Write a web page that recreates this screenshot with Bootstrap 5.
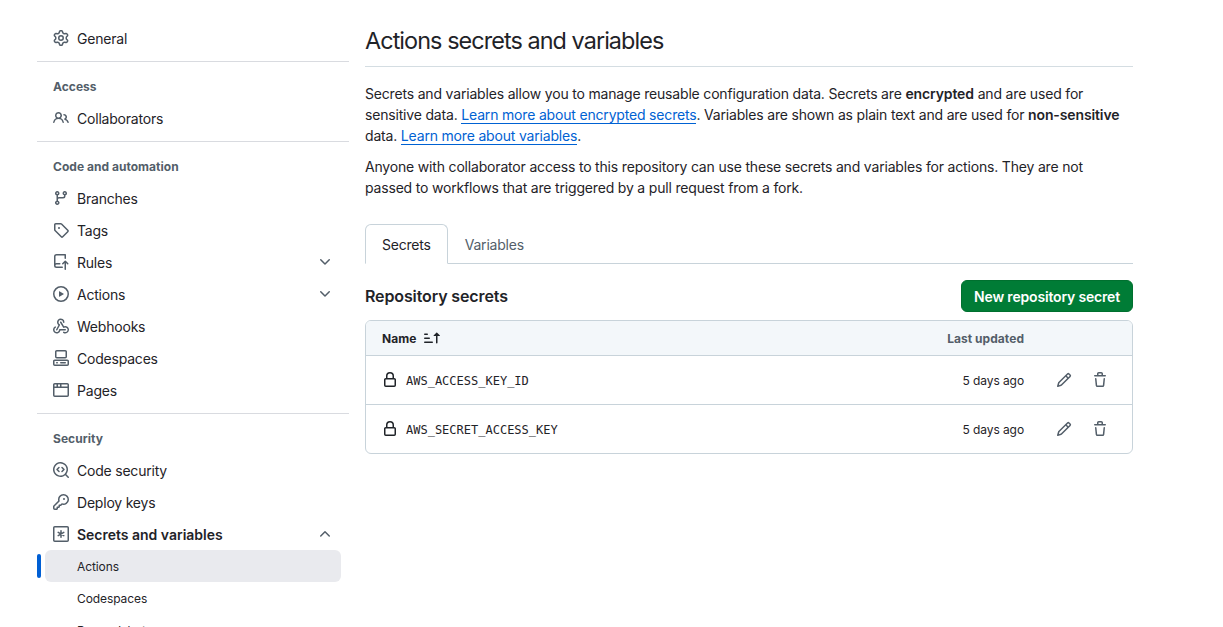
<!DOCTYPE html>
<html lang="en">
<head>
<meta charset="utf-8">
<meta name="viewport" content="width=device-width, initial-scale=1">
<title>Actions secrets and variables</title>
<link href="https://cdn.jsdelivr.net/npm/bootstrap@5.3.0/dist/css/bootstrap.min.css" rel="stylesheet">
<style>
:root { --ink:#1f2328; --dim:#535e69; --line:#d9dbe0; --edge:#c8d3da; }
body { font-family:Inter,"Liberation Sans",sans-serif; font-size:14px; font-weight:440; letter-spacing:-.21px; line-height:21px; color:var(--ink); background:#fff; overflow:hidden; height:627px; }
.page { padding:22px 90px 0 37px; gap:16px; }
.side { width:312px; flex:none; }
.side hr { margin:7px 0 0; border:0; border-top:1px solid var(--line); opacity:1; }
.side h3 { font-size:12px; line-height:18px; font-weight:650; color:var(--dim); margin:0; padding:16px 16px 6px; height:40px; letter-spacing:.03px; }
.side .nav-link { height:32px; padding:0 16px; gap:8px; color:var(--ink); font-size:14px; line-height:20px; }
.side .nav-link span { position:relative; top:1px; }
.side .nav-link.fw-semibold { letter-spacing:-.01px; }
.side svg, .act svg { fill:var(--dim); flex:none; }
.side .sub { font-size:12px; letter-spacing:-.09px; padding-left:32px; margin:0 8px; border-radius:6px; }
.side .sub.current { background:#e9eaee; position:relative; }
.side .sub.current::before { content:""; position:absolute; left:-8px; top:4px; width:4px; height:24px; border-radius:2px; background:#005fd4; }
.main { flex:1; min-width:0; }
h1 { font-size:23.4px; line-height:36px; font-weight:440; letter-spacing:-.93px; margin:0 0 16px; padding:1px 0 7px; border-bottom:1px solid #d4dde2; }
.main p { margin:0 0 10px; white-space:nowrap; letter-spacing:-.18px; }
.main p b { font-weight:600; letter-spacing:-.12px; }
.main p a { color:#0062d3; text-decoration:none; border-bottom:1px solid #0062d3; }
.nav-tabs { margin-top:26px; height:40px; --bs-nav-tabs-border-color:var(--edge); --bs-nav-tabs-border-radius:6px; }
.nav-tabs .nav-link { height:40px; padding:9px 16px; color:var(--dim); line-height:22px; }
.nav-tabs .nav-link.active { color:var(--ink); border-color:var(--edge) var(--edge) #fff; border-left-color:var(--edge); }
h2 { font-size:16px; line-height:24px; font-weight:600; margin:0; letter-spacing:-.12px; }
.btn-new { --bs-btn-bg:#007c36; --bs-btn-color:#fff; --bs-btn-border-color:#00702f; --bs-btn-hover-bg:#00702f; --bs-btn-hover-color:#fff; width:172px; height:32px; padding:2px 0 0; font-size:14px; font-weight:600; letter-spacing:-.18px; line-height:20px; border-radius:6px; white-space:nowrap; }
.box { border:1px solid var(--edge); border-radius:6px; margin-top:8px; font-size:12px; line-height:18px; letter-spacing:-.09px; overflow:hidden; }
.box-head { height:35px; background:#f3f7fa; padding:0 108px 0 16px; font-weight:650; letter-spacing:.05px; border-bottom:1px solid var(--edge); }
.box-head span { padding-top:1px; }
.updated { color:var(--dim); }
.box-row { height:48px; padding:0 24px 0 16px; }
.box-row.ruled { height:49px; border-bottom:1px solid var(--edge); }
.box-row span, .box-row code { padding-top:2px; }
.box-row code { font:12px "DejaVu Sans Mono",monospace; letter-spacing:0; color:var(--ink); margin-left:8px; }
.act { border:0; background:none; padding:0; width:16px; height:16px; line-height:0; }
.act.edit { margin:0 20px 0 32px; }
</style>
</head>
<body>
<svg class="d-none" xmlns="http://www.w3.org/2000/svg">
<symbol id="gear" viewBox="0 0 16 16"><path d="M8 0a8.2 8.2 0 0 1 .701.031C9.444.095 9.99.645 10.16 1.29l.288 1.107c.018.066.079.158.212.224.231.114.454.243.668.386.123.082.233.09.299.071l1.103-.303c.644-.176 1.392.021 1.82.63.27.385.506.792.704 1.218.315.675.111 1.422-.364 1.891l-.814.806c-.049.048-.098.147-.088.294.016.257.016.515 0 .772-.01.147.038.246.088.294l.814.806c.475.469.679 1.216.364 1.891a7.977 7.977 0 0 1-.704 1.217c-.428.61-1.176.807-1.82.63l-1.102-.302c-.067-.019-.177-.011-.3.071a5.909 5.909 0 0 1-.668.386c-.133.066-.194.158-.211.224l-.29 1.106c-.168.646-.715 1.196-1.458 1.26a8.006 8.006 0 0 1-1.402 0c-.743-.064-1.289-.614-1.458-1.26l-.289-1.106c-.018-.066-.079-.158-.212-.224a5.738 5.738 0 0 1-.668-.386c-.123-.082-.233-.09-.299-.071l-1.103.303c-.644.176-1.392-.021-1.82-.63a8.12 8.12 0 0 1-.704-1.218c-.315-.675-.111-1.422.363-1.891l.815-.806c.05-.048.098-.147.088-.294a6.214 6.214 0 0 1 0-.772c.01-.147-.038-.246-.088-.294l-.815-.806C.635 6.045.431 5.298.746 4.623a7.92 7.92 0 0 1 .704-1.217c.428-.61 1.176-.807 1.82-.63l1.102.302c.067.019.177.011.3-.071.214-.143.437-.272.668-.386.133-.066.194-.158.211-.224l.29-1.106C6.009.645 6.556.095 7.299.03 7.53.01 7.764 0 8 0Zm-.571 1.525c-.036.003-.108.036-.137.146l-.289 1.105c-.147.561-.549.967-.998 1.189-.173.086-.34.183-.5.29-.417.278-.97.423-1.529.27l-1.103-.303c-.109-.03-.175.016-.195.045-.22.312-.412.644-.573.99-.014.031-.021.11.059.19l.815.806c.411.406.562.957.53 1.456a4.709 4.709 0 0 0 0 .582c.032.499-.119 1.05-.53 1.456l-.815.806c-.081.08-.073.159-.059.19.162.346.353.677.573.989.02.03.085.076.195.046l1.102-.303c.56-.153 1.113-.008 1.53.27.161.107.328.204.501.29.447.222.85.629.997 1.189l.289 1.105c.029.109.101.143.137.146a6.6 6.6 0 0 0 1.142 0c.036-.003.108-.036.137-.146l.289-1.105c.147-.561.549-.967.998-1.189.173-.086.34-.183.5-.29.417-.278.97-.423 1.529-.27l1.103.303c.109.029.175-.016.195-.045.22-.313.411-.644.573-.99.014-.031.021-.11-.059-.19l-.815-.806c-.411-.406-.562-.957-.53-1.456a4.709 4.709 0 0 0 0-.582c-.032-.499.119-1.05.53-1.456l.815-.806c.081-.08.073-.159.059-.19a6.464 6.464 0 0 0-.573-.989c-.02-.03-.085-.076-.195-.046l-1.102.303c-.56.153-1.113.008-1.53-.27a4.44 4.44 0 0 0-.501-.29c-.447-.222-.85-.629-.997-1.189l-.289-1.105c-.029-.11-.101-.143-.137-.146a6.6 6.6 0 0 0-1.142 0ZM11 8a3 3 0 1 1-6 0 3 3 0 0 1 6 0ZM9.5 8a1.5 1.5 0 1 0-3.001.001A1.5 1.5 0 0 0 9.5 8Z"/></symbol>
<symbol id="people" viewBox="0 0 16 16"><path d="M2 5.5a3.5 3.5 0 1 1 5.898 2.549 5.508 5.508 0 0 1 3.034 4.084.75.75 0 1 1-1.482.235 4 4 0 0 0-7.9 0 .75.75 0 0 1-1.482-.236A5.507 5.507 0 0 1 3.102 8.05 3.493 3.493 0 0 1 2 5.5ZM11 4a3.001 3.001 0 0 1 2.22 5.018 5.01 5.01 0 0 1 2.56 3.012.749.749 0 0 1-.885.954.752.752 0 0 1-.549-.514 3.507 3.507 0 0 0-2.522-2.372.75.75 0 0 1-.574-.73v-.352a.75.75 0 0 1 .416-.672A1.5 1.5 0 0 0 11 5.5.75.75 0 0 1 11 4Zm-5.5-.5a2 2 0 1 0-.001 3.999A2 2 0 0 0 5.5 3.5Z"/></symbol>
<symbol id="branch" viewBox="0 0 16 16"><path d="M9.5 3.25a2.25 2.25 0 1 1 3 2.122V6A2.5 2.5 0 0 1 10 8.5H6a1 1 0 0 0-1 1v1.128a2.251 2.251 0 1 1-1.5 0V5.372a2.25 2.25 0 1 1 1.5 0v1.836A2.493 2.493 0 0 1 6 7h4a1 1 0 0 0 1-1v-.628A2.25 2.25 0 0 1 9.5 3.25Zm-6 0a.75.75 0 1 0 1.5 0 .75.75 0 0 0-1.5 0Zm8.25-.75a.75.75 0 1 0 0 1.5.75.75 0 0 0 0-1.5ZM4.25 12a.75.75 0 1 0 0 1.5.75.75 0 0 0 0-1.5Z"/></symbol>
<symbol id="tag" viewBox="0 0 16 16"><path d="M1 7.775V2.75C1 1.784 1.784 1 2.75 1h5.025c.464 0 .91.184 1.238.513l6.25 6.25a1.75 1.75 0 0 1 0 2.474l-5.026 5.026a1.75 1.75 0 0 1-2.474 0l-6.25-6.25A1.752 1.752 0 0 1 1 7.775Zm1.5 0c0 .066.026.13.073.177l6.25 6.25a.25.25 0 0 0 .354 0l5.025-5.025a.25.25 0 0 0 0-.354l-6.25-6.25a.25.25 0 0 0-.177-.073H2.75a.25.25 0 0 0-.25.25ZM6 5a1 1 0 1 1 0 2 1 1 0 0 1 0-2Z"/></symbol>
<symbol id="push" viewBox="0 0 16 16"><path d="M1 2.5A2.5 2.5 0 0 1 3.5 0h8.75a.75.75 0 0 1 .75.75v3.5a.75.75 0 0 1-1.5 0V1.5h-8a1 1 0 0 0-1 1v6.708A2.493 2.493 0 0 1 3.5 9h3.25a.75.75 0 0 1 0 1.5H3.5a1 1 0 0 0 0 2h5.75a.75.75 0 0 1 0 1.5H3.5A2.5 2.5 0 0 1 1 11.5Zm13.23 7.79h-.001l-1.224-1.224v6.184a.75.75 0 0 1-1.5 0V9.066L10.28 10.29a.75.75 0 0 1-1.06-1.061l2.505-2.504a.75.75 0 0 1 1.06 0L15.29 9.23a.751.751 0 0 1-.018 1.042.751.751 0 0 1-1.042.018Z"/></symbol>
<symbol id="play" viewBox="0 0 16 16"><path d="M8 0a8 8 0 1 1 0 16A8 8 0 0 1 8 0ZM1.5 8a6.5 6.5 0 1 0 13 0 6.5 6.5 0 0 0-13 0Zm4.879-2.773 4.264 2.559a.25.25 0 0 1 0 .428l-4.264 2.559A.25.25 0 0 1 6 10.559V5.442a.25.25 0 0 1 .379-.215Z"/></symbol>
<symbol id="webhook" viewBox="0 0 16 16"><path d="M5.5 4.25a2.25 2.25 0 0 1 4.5 0 .75.75 0 0 0 1.5 0 3.75 3.75 0 1 0-6.14 2.889l-2.272 4.258a.75.75 0 0 0 1.324.706L7 7.25a.75.75 0 0 0-.309-1.015A2.25 2.25 0 0 1 5.5 4.25Z"/><path d="M7.364 3.607a.75.75 0 0 1 1.03.257l2.608 4.349a3.75 3.75 0 1 1-.628 6.785.75.75 0 0 1 .752-1.299 2.25 2.25 0 1 0-.033-3.88.75.75 0 0 1-1.03-.256L7.107 4.636a.75.75 0 0 1 .257-1.03Z"/><path d="M2.9 8.776A.75.75 0 0 1 2.625 9.8 2.25 2.25 0 1 0 6 11.75a.75.75 0 0 1 .75-.751h5.5a.75.75 0 0 1 0 1.5H7.425a3.751 3.751 0 1 1-5.55-3.998.75.75 0 0 1 1.024.274Z"/></symbol>
<symbol id="codespaces" viewBox="0 0 16 16"><path d="M0 11.25c0-.966.784-1.75 1.75-1.75h12.5c.966 0 1.75.784 1.75 1.75v3A1.75 1.75 0 0 1 14.25 16H1.75A1.75 1.75 0 0 1 0 14.25Zm2-9.5C2 .784 2.784 0 3.75 0h8.5C13.216 0 14 .784 14 1.75v5a1.75 1.75 0 0 1-1.75 1.75h-8.5A1.75 1.75 0 0 1 2 6.75Zm1.75-.25a.25.25 0 0 0-.25.25v5c0 .138.112.25.25.25h8.5a.25.25 0 0 0 .25-.25v-5a.25.25 0 0 0-.25-.25Zm-2 9.5a.25.25 0 0 0-.25.25v3c0 .138.112.25.25.25h12.5a.25.25 0 0 0 .25-.25v-3a.25.25 0 0 0-.25-.25Z"/><path d="M7 12.75a.75.75 0 0 1 .75-.75h4.5a.75.75 0 0 1 0 1.5h-4.5a.75.75 0 0 1-.75-.75Zm-4 0a.75.75 0 0 1 .75-.75h.5a.75.75 0 0 1 0 1.5h-.5a.75.75 0 0 1-.75-.75Z"/></symbol>
<symbol id="browser" viewBox="0 0 16 16"><path d="M0 2.75C0 1.784.784 1 1.75 1h12.5c.966 0 1.75.784 1.75 1.75v10.5A1.75 1.75 0 0 1 14.25 15H1.75A1.75 1.75 0 0 1 0 13.25ZM14.5 6h-13v7.25c0 .138.112.25.25.25h12.5a.25.25 0 0 0 .25-.25Zm-6-3.5v2h6V2.75a.25.25 0 0 0-.25-.25ZM5 2.5v2h2v-2Zm-3.25 0a.25.25 0 0 0-.25.25V4.5h2v-2Z"/></symbol>
<symbol id="scan" viewBox="0 0 16 16"><path d="M8.47 4.97a.75.75 0 0 0 0 1.06L9.94 7.5 8.47 8.97a.75.75 0 1 0 1.06 1.06l2-2a.75.75 0 0 0 0-1.06l-2-2a.75.75 0 0 0-1.06 0ZM6.53 6.03a.75.75 0 0 0-1.06-1.06l-2 2a.75.75 0 0 0 0 1.06l2 2a.75.75 0 1 0 1.06-1.06L5.06 7.5l1.47-1.47Z"/><path d="M12.246 13.307a7.501 7.501 0 1 1 1.06-1.06l2.474 2.473a.749.749 0 0 1-.326 1.275.749.749 0 0 1-.734-.215ZM1.5 7.5a6.002 6.002 0 0 0 3.608 5.504 6.002 6.002 0 0 0 6.486-1.117.748.748 0 0 1 .292-.293A6 6 0 1 0 1.5 7.5Z"/></symbol>
<symbol id="key" viewBox="0 0 16 16"><path d="M10.5 0a5.499 5.499 0 1 1-1.288 10.848l-.932.932a.749.749 0 0 1-.53.22H7v.75a.749.749 0 0 1-.22.53l-.5.5a.749.749 0 0 1-.53.22H5v.75a.749.749 0 0 1-.22.53l-.5.5a.749.749 0 0 1-.53.22h-2A1.75 1.75 0 0 1 0 14.25v-2c0-.199.079-.389.22-.53l4.932-4.932A5.5 5.5 0 0 1 10.5 0Zm-4 5.5c-.001.431.069.86.205 1.269a.75.75 0 0 1-.181.768L1.5 12.56v1.69c0 .138.112.25.25.25h1.69l.06-.06v-1.19a.75.75 0 0 1 .75-.75h1.19l.06-.06v-1.19a.75.75 0 0 1 .75-.75h1.19l1.023-1.025a.75.75 0 0 1 .768-.18A4 4 0 1 0 6.5 5.5ZM11 6a1 1 0 1 1 0-2 1 1 0 0 1 0 2Z"/></symbol>
<symbol id="asterisk" viewBox="0 0 16 16"><rect x=".75" y=".75" width="14.5" height="14.5" rx="1" fill="none" stroke="#535e69" stroke-width="1.5"/><path d="M8 4.75v6.5M5.2 6.4l5.6 3.2M5.2 9.6l5.6-3.2" stroke="#535e69" stroke-width="1.5" stroke-linecap="round"/></symbol>
<symbol id="down" viewBox="0 0 16 16"><path d="M12.78 5.22a.749.749 0 0 1 0 1.06l-4.25 4.25a.749.749 0 0 1-1.06 0L3.22 6.28a.749.749 0 1 1 1.06-1.06L8 8.939l3.72-3.719a.749.749 0 0 1 1.06 0Z"/></symbol>
<symbol id="up" viewBox="0 0 16 16"><path d="M3.22 10.53a.749.749 0 0 1 0-1.06l4.25-4.25a.749.749 0 0 1 1.06 0l4.25 4.25a.749.749 0 1 1-1.06 1.06L8 6.811 4.28 10.53a.749.749 0 0 1-1.06 0Z"/></symbol>
<symbol id="sort" viewBox="0 0 16 16"><path d="m12.927 2.573 3 3A.25.25 0 0 1 15.75 6H13.5v6.75a.75.75 0 0 1-1.5 0V6H9.75a.25.25 0 0 1-.177-.427l3-3a.25.25 0 0 1 .354 0ZM0 12.25a.75.75 0 0 1 .75-.75h7.5a.75.75 0 0 1 0 1.5H.75a.75.75 0 0 1-.75-.75Zm0-4a.75.75 0 0 1 .75-.75h4.5a.75.75 0 0 1 0 1.5H.75A.75.75 0 0 1 0 8.25Zm0-4a.75.75 0 0 1 .75-.75h2.5a.75.75 0 0 1 0 1.5H.75A.75.75 0 0 1 0 4.25Z"/></symbol>
<symbol id="lock" viewBox="0 0 16 16"><path d="M4 4a4 4 0 0 1 8 0v2h.25c.966 0 1.75.784 1.75 1.75v5.5A1.75 1.75 0 0 1 12.25 15h-8.5A1.75 1.75 0 0 1 2 13.25v-5.5C2 6.784 2.784 6 3.75 6H4Zm8.25 3.5h-8.5a.25.25 0 0 0-.25.25v5.5c0 .138.112.25.25.25h8.5a.25.25 0 0 0 .25-.25v-5.5a.25.25 0 0 0-.25-.25ZM10.5 6V4a2.5 2.5 0 1 0-5 0v2Z"/></symbol>
<symbol id="pencil" viewBox="0 0 16 16"><path d="M11.013 1.427a1.75 1.75 0 0 1 2.474 0l1.086 1.086a1.75 1.75 0 0 1 0 2.474l-8.61 8.61c-.21.21-.47.364-.756.445l-3.251.93a.75.75 0 0 1-.927-.928l.929-3.25c.081-.286.235-.547.445-.758l8.61-8.61Zm.176 4.823L9.75 4.81l-6.286 6.287a.253.253 0 0 0-.064.108l-.558 1.953 1.953-.558a.253.253 0 0 0 .108-.064Zm1.238-3.763a.25.25 0 0 0-.354 0L10.811 3.75l1.439 1.44 1.263-1.263a.25.25 0 0 0 0-.354Z"/></symbol>
<symbol id="trash" viewBox="0 0 16 16"><path d="M11 1.75V3h2.25a.75.75 0 0 1 0 1.5H2.75a.75.75 0 0 1 0-1.5H5V1.75C5 .784 5.784 0 6.75 0h2.5C10.216 0 11 .784 11 1.75ZM4.496 6.675l.66 6.6a.25.25 0 0 0 .249.225h5.19a.25.25 0 0 0 .249-.225l.66-6.6a.75.75 0 0 1 1.492.149l-.66 6.6A1.748 1.748 0 0 1 10.595 15h-5.19a1.75 1.75 0 0 1-1.741-1.575l-.66-6.6a.75.75 0 1 1 1.492-.15ZM6.5 1.75V3h3V1.75a.25.25 0 0 0-.25-.25h-2.5a.25.25 0 0 0-.25.25Z"/></symbol>
</svg>

<div class="page d-flex align-items-start">
  <nav class="side nav flex-column flex-nowrap">
    <a class="nav-link d-flex align-items-center" href="#"><svg width="16" height="16"><use href="#gear"/></svg><span>General</span></a>
    <hr>
    <h3>Access</h3>
    <a class="nav-link d-flex align-items-center" href="#"><svg width="16" height="16"><use href="#people"/></svg><span>Collaborators</span></a>
    <hr>
    <h3>Code and automation</h3>
    <a class="nav-link d-flex align-items-center" href="#"><svg width="16" height="16"><use href="#branch"/></svg><span>Branches</span></a>
    <a class="nav-link d-flex align-items-center" href="#"><svg width="16" height="16"><use href="#tag"/></svg><span>Tags</span></a>
    <a class="nav-link d-flex align-items-center" href="#"><svg width="16" height="16"><use href="#push"/></svg><span>Rules</span><svg class="ms-auto" width="16" height="16"><use href="#down"/></svg></a>
    <a class="nav-link d-flex align-items-center" href="#"><svg width="16" height="16"><use href="#play"/></svg><span>Actions</span><svg class="ms-auto" width="16" height="16"><use href="#down"/></svg></a>
    <a class="nav-link d-flex align-items-center" href="#"><svg width="16" height="16"><use href="#webhook"/></svg><span>Webhooks</span></a>
    <a class="nav-link d-flex align-items-center" href="#"><svg width="16" height="16"><use href="#codespaces"/></svg><span>Codespaces</span></a>
    <a class="nav-link d-flex align-items-center" href="#"><svg width="16" height="16"><use href="#browser"/></svg><span>Pages</span></a>
    <hr>
    <h3>Security</h3>
    <a class="nav-link d-flex align-items-center" href="#"><svg width="16" height="16"><use href="#scan"/></svg><span>Code security</span></a>
    <a class="nav-link d-flex align-items-center" href="#"><svg width="16" height="16"><use href="#key"/></svg><span>Deploy keys</span></a>
    <a class="nav-link d-flex align-items-center fw-semibold" href="#"><svg width="16" height="16"><use href="#asterisk"/></svg><span>Secrets and variables</span><svg class="ms-auto" width="16" height="16"><use href="#up"/></svg></a>
    <a class="nav-link sub current d-flex align-items-center" href="#"><span>Actions</span></a>
    <a class="nav-link sub d-flex align-items-center" href="#"><span>Codespaces</span></a>
    <a class="nav-link sub d-flex align-items-center" href="#"><span>Dependabot</span></a>
  </nav>

  <main class="main">
    <h1>Actions secrets and variables</h1>
    <p>Secrets and variables allow you to manage reusable configuration data. Secrets are <b>encrypted</b> and are used for<br>sensitive data. <a href="#">Learn more about encrypted secrets</a>. Variables are shown as plain text and are used for <b>non-sensitive</b><br>data. <a href="#">Learn more about variables</a>.</p>
    <p>Anyone with collaborator access to this repository can use these secrets and variables for actions. They are not<br>passed to workflows that are triggered by a pull request from a fork.</p>
    <ul class="nav nav-tabs">
      <li class="nav-item"><a class="nav-link active" href="#">Secrets</a></li>
      <li class="nav-item"><a class="nav-link" href="#">Variables</a></li>
    </ul>
    <div class="d-flex align-items-center justify-content-between mt-3">
      <h2>Repository secrets</h2>
      <button class="btn btn-new" type="button">New repository secret</button>
    </div>
    <div class="box">
      <div class="box-head d-flex align-items-center">
        <span>Name</span><svg class="ms-2" width="16" height="16" fill="#1f2328"><use href="#sort"/></svg>
        <span class="updated ms-auto">Last updated</span>
      </div>
      <div class="box-row ruled d-flex align-items-center">
        <svg width="16" height="16" fill="#1f2328"><use href="#lock"/></svg><code>AWS_ACCESS_KEY_ID</code>
        <span class="ms-auto">5 days ago</span>
        <button class="act edit" type="button" aria-label="Edit"><svg width="16" height="16"><use href="#pencil"/></svg></button>
        <button class="act" type="button" aria-label="Delete"><svg width="16" height="16"><use href="#trash"/></svg></button>
      </div>
      <div class="box-row d-flex align-items-center">
        <svg width="16" height="16" fill="#1f2328"><use href="#lock"/></svg><code>AWS_SECRET_ACCESS_KEY</code>
        <span class="ms-auto">5 days ago</span>
        <button class="act edit" type="button" aria-label="Edit"><svg width="16" height="16"><use href="#pencil"/></svg></button>
        <button class="act" type="button" aria-label="Delete"><svg width="16" height="16"><use href="#trash"/></svg></button>
      </div>
    </div>
  </main>
</div>
<script src="https://cdn.jsdelivr.net/npm/bootstrap@5.3.0/dist/js/bootstrap.bundle.min.js"></script>
</body>
</html>
